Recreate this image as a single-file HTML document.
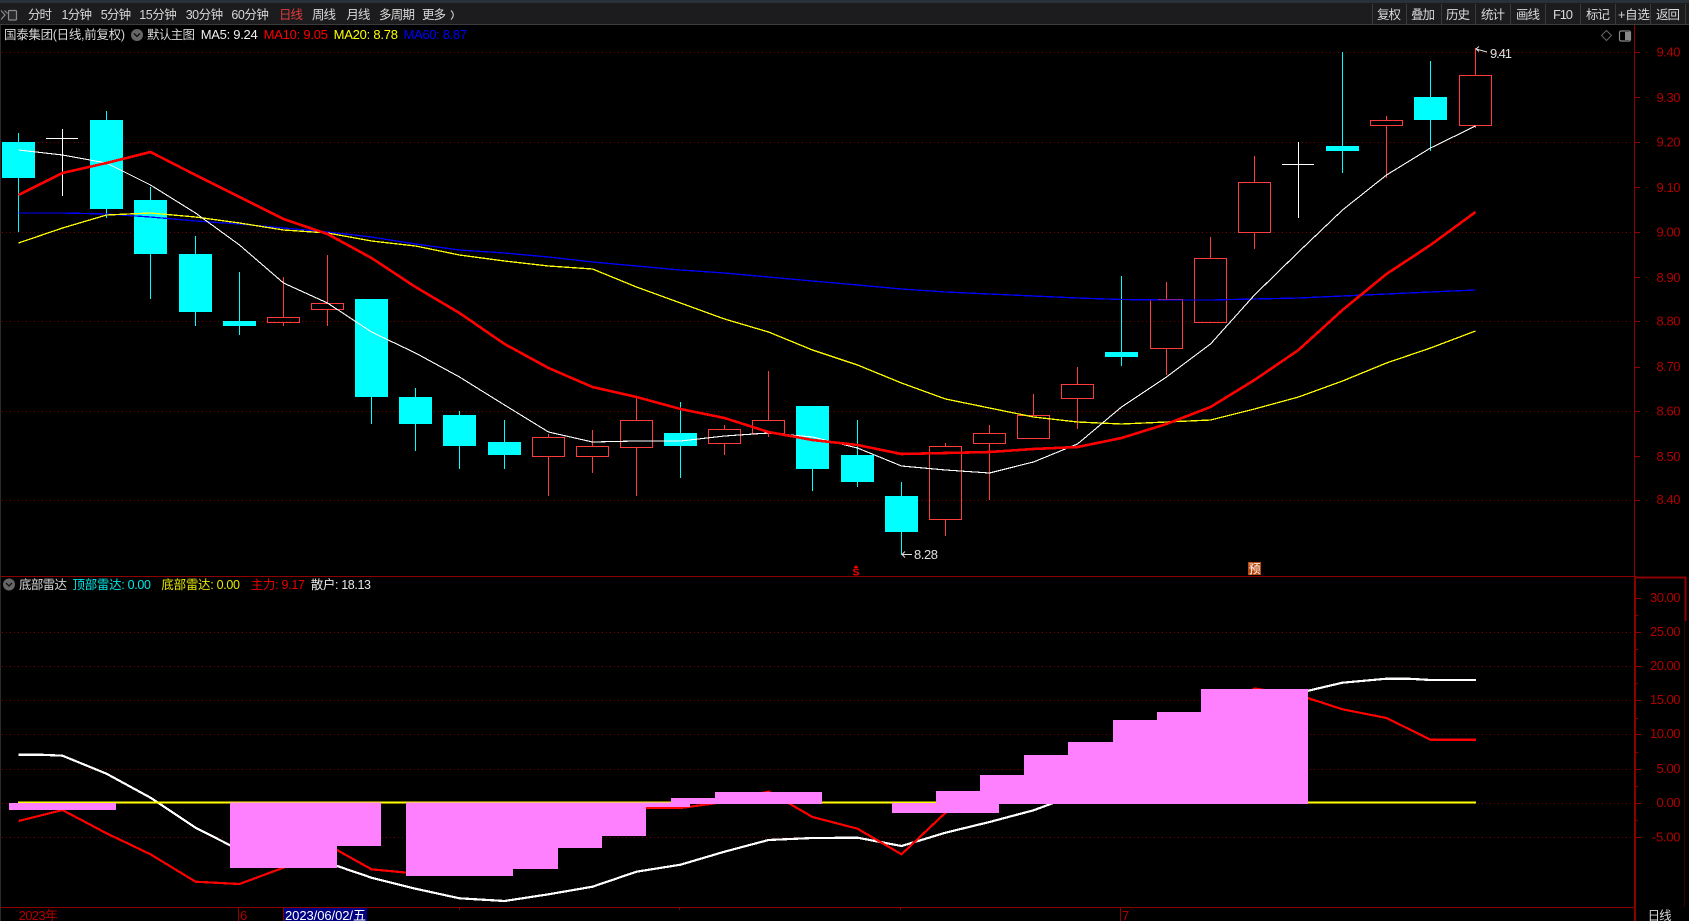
<!DOCTYPE html>
<html lang="zh">
<head>
<meta charset="utf-8">
<title>国泰集团</title>
<style>
html,body{margin:0;padding:0;background:#000;width:1689px;height:921px;overflow:hidden}
svg{display:block}
text{font-family:"Liberation Sans","Noto Sans CJK SC",sans-serif;font-size:12.5px}
.n{font-size:13px}
.tb text{fill:#d8d8d8}
.ax text{fill:#b00000;font-size:13px}
</style>
</head>
<body>
<svg xmlns="http://www.w3.org/2000/svg" width="1689" height="921" viewBox="0 0 1689 921">
<rect width="1689" height="921" fill="#000"/>
<!-- top bars -->
<rect width="1689" height="3" fill="#2a3038"/>
<rect y="3" width="1689" height="21" fill="#1c1c1e"/>
<rect y="24" width="1689" height="1" fill="#3c3c3c"/>
<rect x="0" y="25" width="1" height="896" fill="#2c2c2c"/>
<!-- toolbar icon -->
<g fill="none" stroke="#8a8a8a" stroke-width="1.2">
<path d="M1 10.5l4 4.5-4 4.5M4.5 10.5l3 3"/>
<rect x="8.5" y="10.5" width="8" height="9.5" rx="1" fill="#2a2a2a"/>
</g>
<!-- toolbar separators -->
<path d="M1372.5 4v20M1406.5 4v20M1441.5 4v20M1475.5 4v20M1510.5 4v20M1545.5 4v20M1580.5 4v20M1615.5 4v20M1650.5 4v20M1685.5 4v20" stroke="#3a3a3a" stroke-width="1" fill="none"/>
<g class="tb">
<text x="28" y="19" textLength="24">分时</text>
<text x="61.5" y="19" textLength="30.5">1分钟</text>
<text x="100.7" y="19" textLength="30.5">5分钟</text>
<text x="139.3" y="19" textLength="37.5">15分钟</text>
<text x="185.7" y="19" textLength="37.5">30分钟</text>
<text x="231.4" y="19" textLength="37.5">60分钟</text>
<text x="279" y="19" textLength="24" style="fill:#e03c3c">日线</text>
<text x="312" y="19" textLength="24">周线</text>
<text x="346.4" y="19" textLength="24">月线</text>
<text x="379" y="19" textLength="36">多周期</text>
<text x="422" y="19" textLength="24">更多</text>
<path d="M451 10.5q4.5 4.5 0 9" stroke="#d8d8d8" fill="none" stroke-width="1"/>
<text x="1377" y="19" textLength="24">复权</text>
<text x="1411" y="19" textLength="24">叠加</text>
<text x="1446" y="19" textLength="24">历史</text>
<text x="1481" y="19" textLength="24">统计</text>
<text x="1516" y="19" textLength="24">画线</text>
<text x="1553" y="19" textLength="20" class="n">F10</text>
<text x="1586" y="19" textLength="24">标记</text>
<text x="1618" y="19" textLength="32">+自选</text>
<text x="1656" y="19" textLength="24">返回</text>
</g>
<!-- header row main -->
<text x="4" y="39" textLength="121" fill="#d8d8d8">国泰集团(日线,前复权)</text>
<circle cx="137" cy="35" r="6" fill="#666"/>
<path d="M134 33.5l3 3 3-3" stroke="#111" stroke-width="1.3" fill="none"/>
<text x="147" y="39" textLength="48" fill="#d8d8d8">默认主图</text>
<text x="200.7" y="39" textLength="57" fill="#f0f0f0" class="n">MA5: 9.24</text>
<text x="263.6" y="39" textLength="64.4" fill="#f00" class="n">MA10: 9.05</text>
<text x="333.6" y="39" textLength="64.4" fill="#ff0" class="n">MA20: 8.78</text>
<text x="403.6" y="39" textLength="63.4" fill="#00f" class="n">MA60: 8.87</text>
<!-- top right mini icons -->
<path d="M1606.5 30.5l5 5-5 5-5-5z" fill="none" stroke="#666" stroke-width="1"/>
<rect x="1619.5" y="31" width="11" height="10" rx="1.5" fill="#000" stroke="#888" stroke-width="1.2"/>
<rect x="1625" y="32" width="5" height="8" fill="#888"/>
<!-- dotted grid main -->
<g stroke="#7c0000" stroke-width="1" stroke-dasharray="1 3" fill="none" shape-rendering="crispEdges">
<path d="M2 52.5H1634M2 142.5H1634M2 232.5H1634M2 321.5H1634M2 411.5H1634M2 500.5H1634"/>
<path d="M2 632.5H1634M2 666.5H1634M2 700.5H1634M2 734.5H1634M2 769.5H1634M2 803.5H1634M2 837.5H1634"/>
</g>
<!-- candles: cyan wicks -->
<g shape-rendering="crispEdges">
<path fill="none" stroke="#0ff" stroke-width="1" d="M18.5 133V232M106.5 111V218M150.5 187V299M195.5 236V326M239.5 272V335M371.5 299V424M415.5 388V451M459.5 411V469M504.5 420V469M680.5 402V478M812.5 406V491M857.5 420V487M901.5 482V555M1121.5 276V366M1342.5 52V173M1430.5 61V151"/>
<path fill="#0ff" d="M2 142h33v36H2zM90 120h33v89H90zM134 200h33v54h-33zM179 254h33v58h-33zM223 321h33v5h-33zM355 299h33v98h-33zM399 397h33v27h-33zM443 415h33v31h-33zM488 442h33v13h-33zM664 433h33v13h-33zM796 406h33v63h-33zM841 455h33v27h-33zM885 496h33v36h-33zM1105 352h33v5h-33zM1326 146h33v5h-33zM1414 97h33v23h-33z"/>
<!-- red candles -->
<path fill="none" stroke="#ff3c3c" stroke-width="1" d="M283.5 277V317M283.5 322V326M327.5 255V303M327.5 309V326M548.5 434V437M548.5 456V496M592.5 430V446M592.5 456V473M636.5 398V420M636.5 447V496M724.5 425V429M724.5 443V455M768.5 371V420M768.5 433V437M945.5 443V446M945.5 519V536M989.5 425V433M989.5 443V500M1033.5 394V415M1077.5 367V384M1077.5 398V429M1166.5 282V299M1166.5 348V375M1210.5 237V258M1254.5 156V182M1254.5 232V249M1386.5 116V120M1386.5 125V178M1475.5 48V75M1475.5 125V128"/>
<path fill="none" stroke="#ff3c3c" stroke-width="1" d="M267.5 317.5h32v5h-32zM311.5 303.5h32v6h-32zM532.5 437.5h32v19h-32zM576.5 446.5h32v10h-32zM620.5 420.5h32v27h-32zM708.5 429.5h32v14h-32zM752.5 420.5h32v13h-32zM929.5 446.5h32v73h-32zM973.5 433.5h32v10h-32zM1017.5 415.5h32v23h-32zM1061.5 384.5h32v14h-32zM1150.5 299.5h32v49h-32zM1194.5 258.5h32v64h-32zM1238.5 182.5h32v50h-32zM1370.5 120.5h32v5h-32zM1459.5 75.5h32v50h-32z"/>
<!-- white dojis -->
<path fill="none" stroke="#fff" stroke-width="1" d="M62.5 129V196M46 138.5H78M1298.5 142V218M1282 164.5H1314"/>
</g>
<!-- moving averages -->
<g fill="none" stroke-linejoin="round" shape-rendering="crispEdges">
<polyline stroke="#0000ff" stroke-width="1.3" points="18.5,213 62.5,213 106.5,214 150.5,217 195.5,221 239.5,224 283.5,228 327.5,232 371.5,237 415.5,244 459.5,250 504.5,253 548.5,257 592.5,262 636.5,266 680.5,270 724.5,273 768.5,277 812.5,281 857.5,285 901.5,289 945.5,292 989.5,294 1033.5,296 1077.5,298 1121.5,299.5 1166.5,300 1210.5,300 1254.5,299 1298.5,298 1342.5,296 1386.5,294 1430.5,292 1475.5,290"/>
<polyline stroke="#ffff00" stroke-width="1.3" points="18.5,243 62.5,228 106.5,215 150.5,213 195.5,217 239.5,223 283.5,230 327.5,233 371.5,241 415.5,246 459.5,255 504.5,261 548.5,266 592.5,269 636.5,287 680.5,303 724.5,319 768.5,332 812.5,350 857.5,365 901.5,383 945.5,399 989.5,408 1033.5,417 1077.5,422 1121.5,424 1166.5,422 1210.5,420 1254.5,409 1298.5,397 1342.5,381 1386.5,363 1430.5,348 1475.5,331"/>
<polyline stroke="#ffffff" stroke-width="1.1" points="18.5,150 62.5,155 106.5,163 150.5,185 195.5,213 239.5,245 283.5,283 327.5,303 371.5,332 415.5,353 459.5,377 504.5,405 548.5,432 592.5,442 636.5,441 680.5,441 724.5,436 768.5,433 812.5,437 857.5,448 901.5,466 945.5,470 989.5,473 1033.5,462 1077.5,444 1121.5,407 1166.5,377 1210.5,344 1254.5,295 1298.5,252 1342.5,210 1386.5,175 1430.5,148 1475.5,126"/>
<polyline stroke="#ff0000" stroke-width="2.6" points="18.5,195 62.5,173 106.5,163 150.5,152 195.5,175 239.5,197 283.5,219 327.5,234 371.5,258 415.5,287 459.5,313 504.5,344 548.5,368 592.5,387 636.5,397 680.5,409 724.5,418 768.5,432 812.5,440 857.5,445 901.5,454 945.5,453 989.5,452 1033.5,449 1077.5,447 1121.5,438 1166.5,424 1210.5,407 1254.5,380 1298.5,350 1342.5,310 1386.5,274 1430.5,245 1475.5,212"/>
</g>
<!-- high/low annotations -->
<path d="M1476 49L1487 52M1476 49l3-2.5M1476 49l3 2.5" stroke="#e0e0e0" stroke-width="1" fill="none"/>
<text x="1490" y="58" textLength="22" fill="#e0e0e0" class="n">9.41</text>
<path d="M902 554.5H912M902 554.5l3-3M902 554.5l3 3" stroke="#e0e0e0" stroke-width="1" fill="none"/>
<text x="914" y="559" textLength="24" fill="#e0e0e0" class="n">8.28</text>
<!-- markers -->
<path d="M853.5 568l2.5-3 2.5 3z" fill="#f00"/>
<text x="852.5" y="575.5" fill="#f00" style="font-size:10.5px;font-weight:bold">S</text>
<rect x="1248" y="562" width="13" height="13" fill="#b9480f"/>
<text x="1248.5" y="573" fill="#fff" style="font-size:12px">预</text>
<!-- axes main -->
<g shape-rendering="crispEdges" fill="none" stroke="#8c0000" stroke-width="1">
<path d="M1634.5 25V577"/>
<path d="M1634 52.5h6M1634 97.5h6M1634 142.5h6M1634 187.5h6M1634 232.5h6M1634 277.5h6M1634 321.5h6M1634 367.5h6M1634 411.5h6M1634 456.5h6M1634 500.5h6"/>
<path d="M1 576.5H1636M1 907.5H1636"/>
</g>
<g class="ax">
<text x="1656.5" y="56.5" textLength="24">9.40</text>
<text x="1656.5" y="102" textLength="24">9.30</text>
<text x="1656.5" y="146.5" textLength="24">9.20</text>
<text x="1656.5" y="192" textLength="24">9.10</text>
<text x="1656.5" y="236.5" textLength="24">9.00</text>
<text x="1656.5" y="282" textLength="24">8.90</text>
<text x="1656.5" y="325.5" textLength="24">8.80</text>
<text x="1656.5" y="371" textLength="24">8.70</text>
<text x="1656.5" y="415.5" textLength="24">8.60</text>
<text x="1656.5" y="461" textLength="24">8.50</text>
<text x="1656.5" y="504" textLength="24">8.40</text>
</g>
<!-- sub chart header -->
<circle cx="9" cy="584.5" r="6" fill="#666"/>
<path d="M6 583l3 3 3-3" stroke="#111" stroke-width="1.3" fill="none"/>
<text x="19" y="589" textLength="48" fill="#d8d8d8">底部雷达</text>
<text x="72.5" y="589" textLength="78.5" fill="#00e8e8">顶部雷达: 0.00</text>
<text x="161.4" y="589" textLength="78.6" fill="#e8e800">底部雷达: 0.00</text>
<text x="250.7" y="589" textLength="54.3" fill="#e80000">主力: 9.17</text>
<text x="310.7" y="589" textLength="60.3" fill="#e8e8e8">散户: 18.13</text>
<!-- sub chart lines -->
<g fill="none" stroke-linejoin="round" shape-rendering="crispEdges">
<polyline stroke="#ffffff" stroke-width="2.2" points="18.5,754.7 40,754.7 62.5,755.7 106.5,773.7 150.5,797.7 195.5,827.7 239.5,850 283.5,857 327.5,862.7 371.5,877.7 415.5,888.7 459.5,898.3 504.5,901 548.5,894.3 592.5,886.7 636.5,871.7 680.5,864.7 724.5,851.7 768.5,840 812.5,838 857.5,837.7 901.5,846 945.5,832.7 989.5,822 1033.5,810.3 1077.5,794 1121.5,775 1166.5,755 1210.5,735 1254.5,715 1298.5,693 1342.5,682.7 1386.5,678.7 1408,678.7 1430.5,680 1476,680"/>
<polyline stroke="#ff0000" stroke-width="2.2" points="18.5,821 62.5,810 106.5,833.3 150.5,854.3 195.5,881.7 239.5,884 283.5,867.7 327.5,846 337,850 371.5,869.3 415.5,873.5 459.5,870 504.5,862 548.5,850 592.5,830 636.5,807.7 680.5,808 724.5,802 768.5,791.5 812.5,817 857.5,828.7 901.5,854.3 945.5,812.7 989.5,790 1033.5,775 1077.5,760 1121.5,745 1166.5,730 1210.5,715 1254.5,688.5 1298.5,695 1342.5,709.3 1386.5,718 1430.5,739.7 1476,739.7"/>
</g>
<rect x="18" y="801.5" width="1458" height="2" fill="#ffff00"/>
<!-- pink bars -->
<path shape-rendering="crispEdges" fill="#ff80ff" d="M9 803H116V810H9zM230 802.5H337V868H230zM337 802.5H381V846H337zM406 802.5H513V876H406zM513 802.5H558V869H513zM558 802.5H602V848H558zM602 802.5H646V836H602zM646 802.5H690V807H646zM671 798H715V804H671zM715 792H822V804H715zM892 803H999V813H892zM936 791H980V804H936zM980 775H1024V804H980zM1024 755H1068V804H1024zM1068 742H1113V804H1068zM1113 720H1157V804H1113zM1157 712H1201V804H1157zM1201 689H1308V804H1201z"/>
<!-- sub axis box -->
<g shape-rendering="crispEdges" fill="none" stroke="#8c0000">
<path stroke-width="2" d="M1635 576.5V921M1634 577.5H1685.5V621"/>
<path stroke-width="1" stroke="#3a0000" d="M1684.5 621V907"/>
<path stroke-width="1" d="M1636 598.5h5M1636 632.5h5M1636 666.5h5M1636 700.5h5M1636 734.5h5M1636 769.5h5M1636 803.5h5M1636 837.5h5M1636 649.5h2M1636 683.5h2M1636 718.5h2M1636 752.5h2M1636 786.5h2M1636 820.5h2M1636 615.5h2"/>
</g>
<g class="ax">
<text x="1650" y="602" textLength="30.5">30.00</text>
<text x="1650" y="636" textLength="30.5">25.00</text>
<text x="1650" y="670" textLength="30.5">20.00</text>
<text x="1650" y="704" textLength="30.5">15.00</text>
<text x="1650" y="738" textLength="30.5">10.00</text>
<text x="1656.5" y="773" textLength="24">5.00</text>
<text x="1656.5" y="807" textLength="24">0.00</text>
<text x="1652" y="841.5" textLength="28.5">-5.00</text>
</g>
<!-- date axis -->
<g shape-rendering="crispEdges" fill="none" stroke="#8c0000" stroke-width="1">
<path d="M238.5 907V921M283.5 907V921M1120.5 907V921M459.5 907v3M679.5 907v3M900.5 907v3"/>
</g>
<text x="18.6" y="920" textLength="39.4" fill="#b00000" class="n">2023年</text>
<text x="240" y="920" fill="#b00000" class="n">6</text>
<text x="1122" y="920" fill="#b00000" class="n">7</text>
<rect x="284" y="908" width="83" height="13" fill="#000080"/>
<text x="285" y="920" textLength="81" fill="#fff" class="n">2023/06/02/五</text>
<text x="1647.6" y="920" textLength="24" fill="#d8d8d8">日线</text>
</svg>
</body>
</html>
